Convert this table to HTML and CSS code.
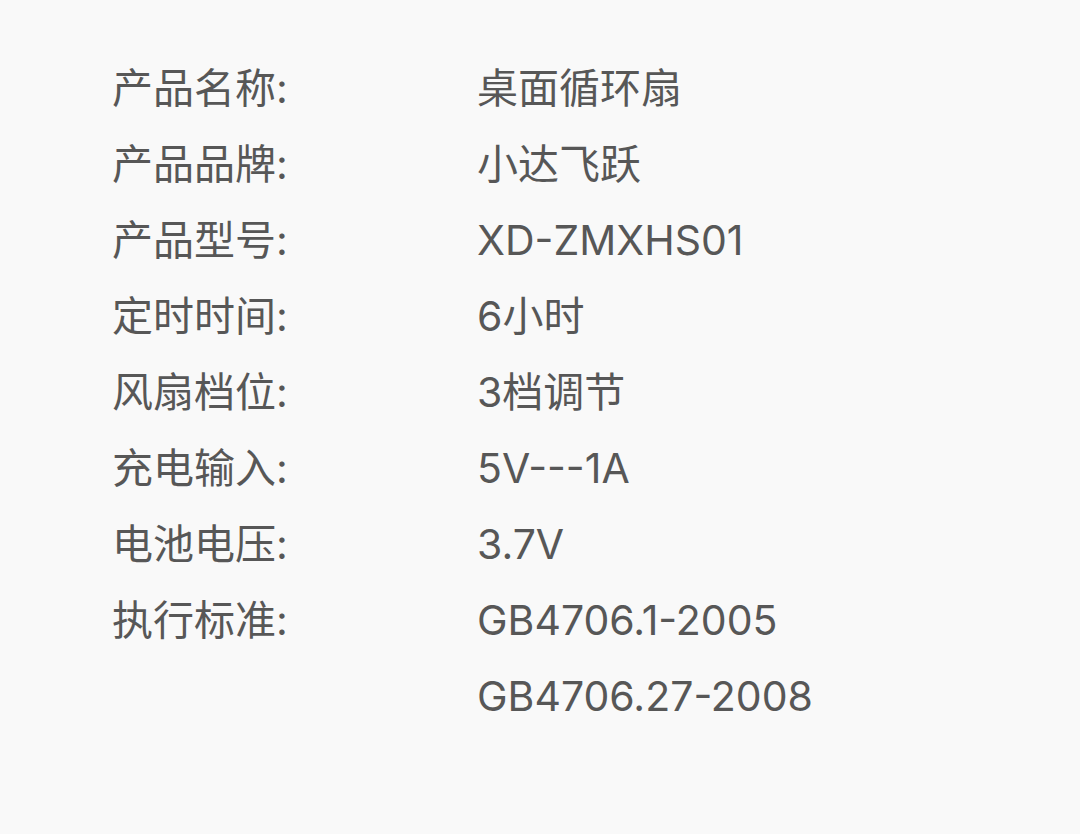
FILE: index.html
```html
<!DOCTYPE html>
<html lang="zh-CN">
<head>
  <meta charset="UTF-8">
  <title>产品参数</title>
  <link rel="stylesheet" href="styles.css">
</head>
<body>
  <div class="specs">
    <div class="label">产品名称:</div>
    <div class="value">桌面循环扇</div>

    <div class="label">产品品牌:</div>
    <div class="value">小达飞跃</div>

    <div class="label">产品型号:</div>
    <div class="value">XD-ZMXHS01</div>

    <div class="label">定时时间:</div>
    <div class="value">6小时</div>

    <div class="label">风扇档位:</div>
    <div class="value">3档调节</div>

    <div class="label">充电输入:</div>
    <div class="value">5V---1A</div>

    <div class="label">电池电压:</div>
    <div class="value">3.7V</div>

    <div class="label">执行标准:</div>
    <div class="value">GB4706.1-2005<br>GB4706.27-2008</div>
  </div>
</body>
</html>
```

FILE: styles.css
```css
* {
  margin: 0;
  padding: 0;
  box-sizing: border-box;
}

body {
  background-color: #f9f9f9;
  color: #575757;
  font-family: "Inter", "Noto Sans CJK SC", sans-serif;
  font-size: 41px;
  height: 834px;
  overflow: hidden;
}

.specs {
  display: grid;
  grid-template-columns: 365px auto;
  padding: 50px 0 0 112px;
  line-height: 76px;
}

.label,
.value {
  white-space: nowrap;
}
```
